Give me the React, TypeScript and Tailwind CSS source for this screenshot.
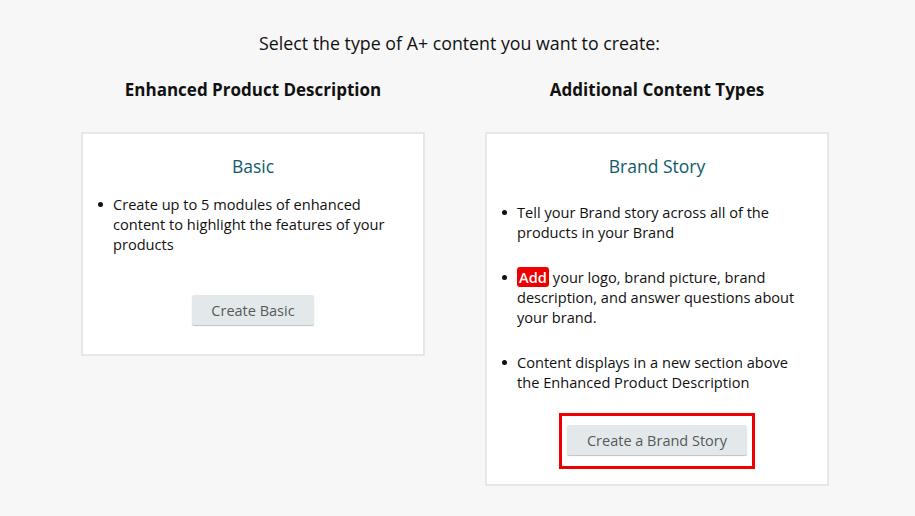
const font = { fontFamily: '"Open Sans", "Noto Sans", sans-serif' };

function Bullet({ children, className = '' }: { children: React.ReactNode; className?: string }) {
	return (
		<li className={`flex gap-[10px] ${className}`}>
			<span className="mt-[8px] h-[5px] w-[5px] shrink-0 rounded-full bg-[#111]" />
			<span>{children}</span>
		</li>
	);
}

function CreateButton({ label, width }: { label: string; width: string }) {
	return (
		<button
			className={`h-[30px] ${width} rounded-[2px] bg-[#e3e9ea] text-[14.5px] text-[#55595b] shadow-[0_1px_1px_rgba(0,0,0,0.25)]`}
		>
			{label}
		</button>
	);
}

export default function App() {
	return (
		<div className="h-[516px] w-[915px] overflow-hidden bg-[#f7f7f7] text-[#111]" style={font}>
			{/* Page title */}
			<div className="pt-[30px] pl-[4px] text-center text-[17.8px] text-[#111]">
				Select the type of A+ content you want to create:
			</div>

			<div className="mt-[20px] flex gap-[60px] pl-[81px]">
				{/* Left column */}
				<div className="flex w-[344px] flex-col items-center">
					<h2 className="text-[17px] font-bold">Enhanced Product Description</h2>
					<div className="mt-[30px] flex h-[224px] w-full flex-col items-center border-2 border-[#e7e7e7] bg-white">
						<h3 className="mt-[19px] text-[17.5px] text-[#0f5b6b]">Basic</h3>
						<ul className="mt-[15px] w-full pl-[15px] pr-[20px] text-[14.6px] leading-[20px]">
							<Bullet>Create up to 5 modules of enhanced content to highlight the features of your products</Bullet>
						</ul>
						<div className="mt-[41px]">
							<CreateButton label="Create Basic" width="w-[122px]" />
						</div>
					</div>
				</div>

				{/* Right column */}
				<div className="flex w-[344px] flex-col items-center">
					<h2 className="text-[17px] font-bold">Additional Content Types</h2>
					<div className="mt-[30px] flex h-[354px] w-full flex-col items-center border-2 border-[#e7e7e7] bg-white">
						<h3 className="mt-[19px] text-[17.5px] text-[#0f5b6b]">Brand Story</h3>
						<ul className="mt-[23px] flex w-full flex-col gap-[25px] pl-[15px] pr-[20px] text-[14.6px] leading-[20px]">
							<Bullet>Tell your Brand story across all of the products in your Brand</Bullet>
							<Bullet>
								<span className="mr-[4px] rounded-[3px] bg-[#ee0000] px-[2px] font-semibold text-white">Add</span>
								your logo, brand picture, brand description, and answer questions about your brand.
							</Bullet>
							<Bullet>Content displays in a new section above the Enhanced Product Description</Bullet>
						</ul>
						<div className="mt-[21px] border-[3px] border-[#ee0000] px-[5px] pt-[9px] pb-[11px]">
							<CreateButton label="Create a Brand Story" width="w-[180px]" />
						</div>
					</div>
				</div>
			</div>
		</div>
	);
}
